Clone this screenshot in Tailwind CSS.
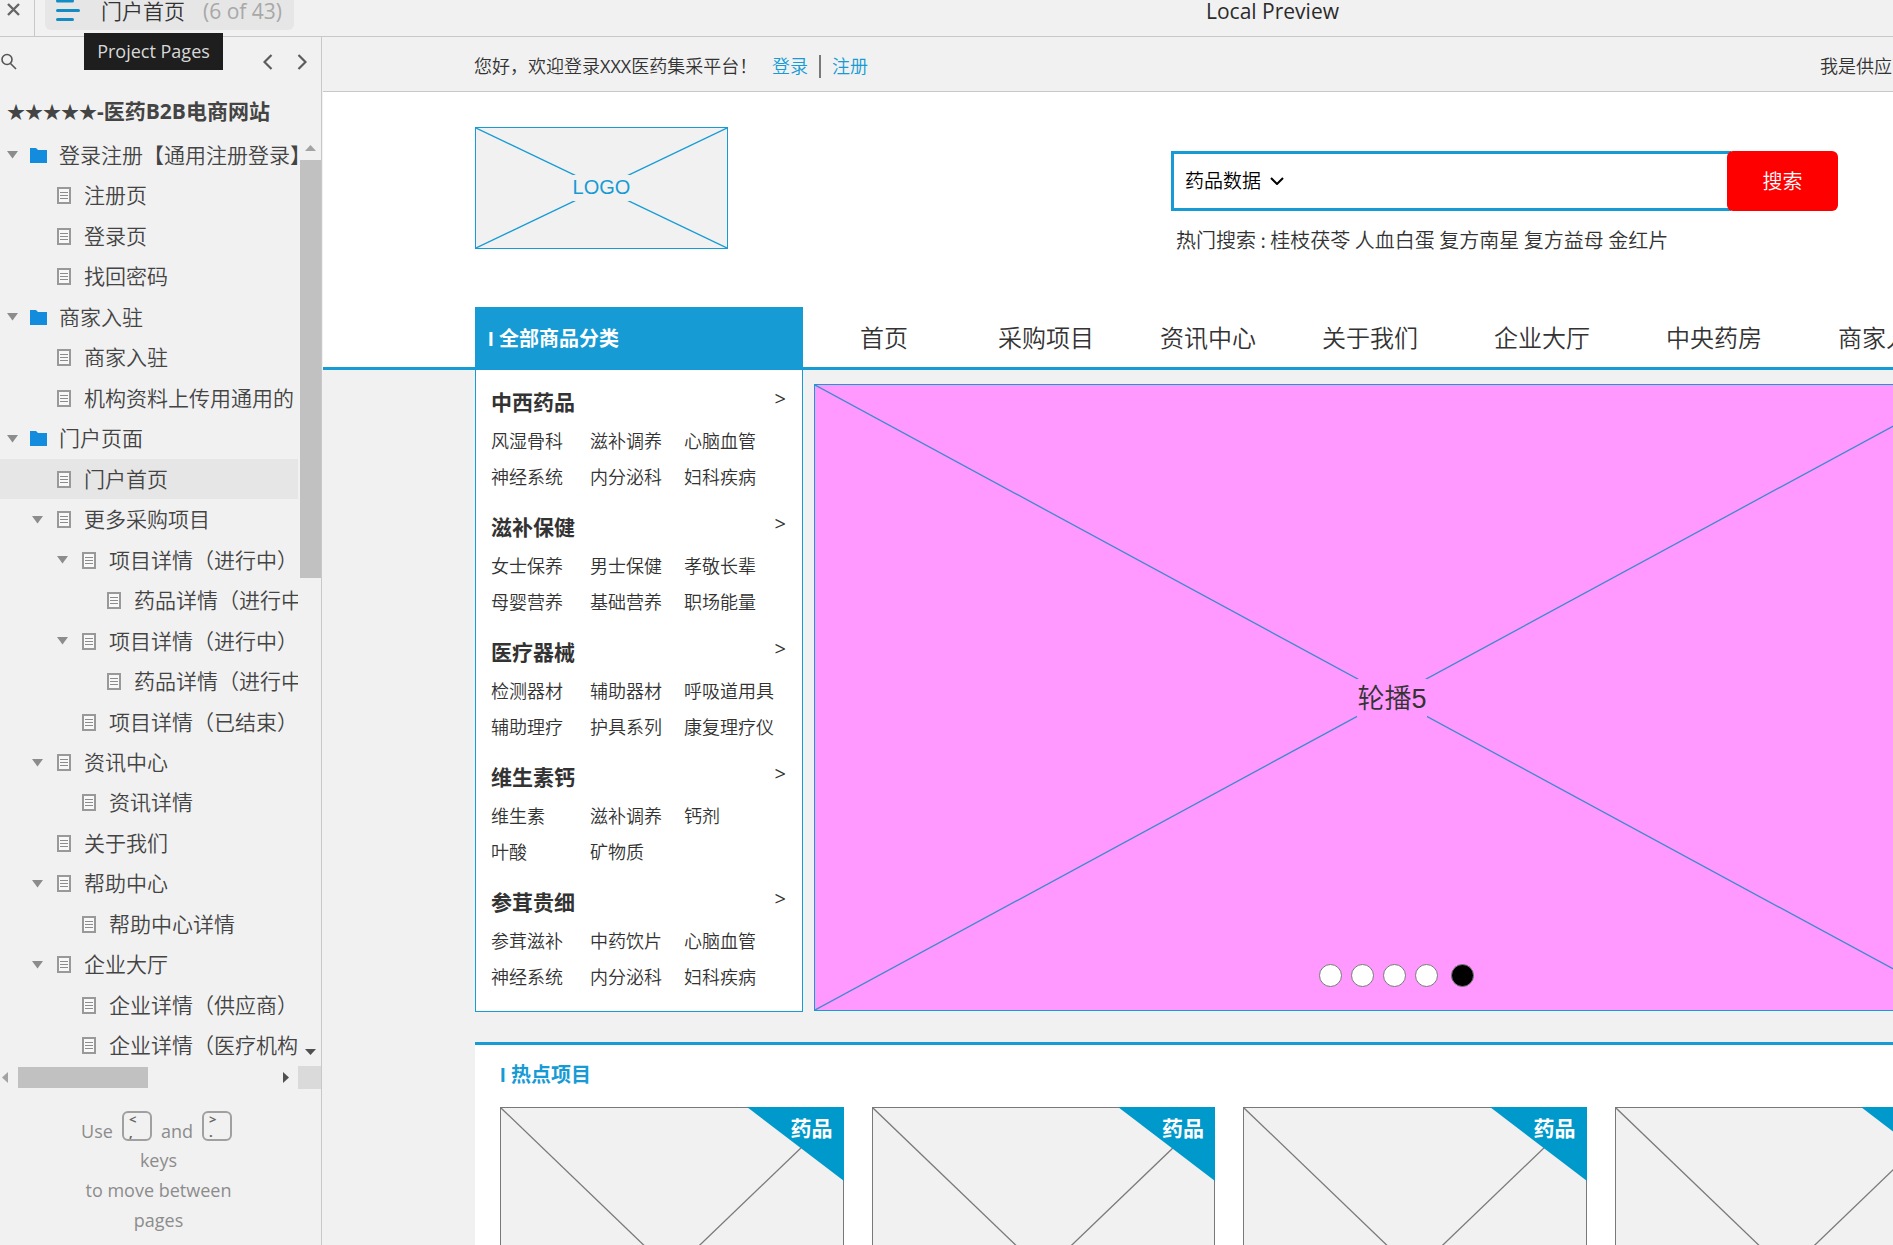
<!DOCTYPE html>
<html lang="zh-CN">
<head>
    <meta charset="UTF-8">
    <meta name="viewport" content="width=device-width, initial-scale=1.0">
    <title>门户首页 - 医药B2B电商网站</title>
    <script src="https://cdn.jsdelivr.net/npm/@tailwindcss/browser@4"></script>
</head>
<body class="flex flex-col h-screen overflow-hidden bg-[#f1f1f1] text-[#333333] font-[350] font-['Open_Sans','Noto_Sans_CJK_SC',sans-serif]">
    <!-- Shared icons -->
    <svg class="hidden" aria-hidden="true">
        <symbol id="icon-arrow" viewBox="0 0 11 8"><path d="M0 0H11L5.5 7.5Z" fill="#8c8c8c"/></symbol>
        <symbol id="icon-folder" viewBox="0 0 17 15"><path d="M0 0H6L8 2H17V15H0Z" fill="#138cdd"/></symbol>
        <symbol id="icon-page" viewBox="0 0 14 17"><path d="M1 1H13V16H1Z" fill="#f8f8f8" stroke="#999999" stroke-width="2"/><path d="M3 5.5H11M3 8.5H11M3 11.5H11" stroke="#8c8c8c" stroke-width="1.2"/></symbol>
    </svg>

    <!-- Player bar -->
    <header class="relative z-10 flex shrink-0 h-[37px] border-b border-[#c8c8c8]">
        <button class="flex w-[35px] pl-[7px] pt-[3px] border-r border-[#c8c8c8]" aria-label="Close">
            <svg class="w-[13px] h-[13px]" viewBox="0 0 13 13" stroke="#666666" stroke-width="2.4"><path d="M1 1L12 12M12 1L1 12"/></svg>
        </button>
        <button class="flex items-start w-[249px] h-[30px] ml-[10px] pl-[11px] rounded-b-md bg-[#e6e6e6] text-[21px] leading-[22px] whitespace-nowrap">
            <svg class="w-[24px] h-[21px]" viewBox="0 0 24 21" stroke="#138cc4" stroke-width="3" stroke-linecap="round"><path d="M1.5 1H16.5M1.5 10.5H22.5M1.5 19.5H16.5"/></svg>
            <span class="ml-[21px]">门户首页</span>
            <span class="ml-[18px] font-normal text-[#a8a8a8]">(6 of 43)</span>
        </button>
        <div class="absolute left-[84px] top-[33px] w-[139px] h-[37px] bg-[#1e1e1e] text-center text-[18px] leading-[36px] font-normal text-[#d8d8d8]">Project Pages</div>
        <div class="ml-[912px] text-[21px] leading-[22px] font-normal text-[#2b2b2b]">Local Preview</div>
    </header>

    <div class="flex grow min-h-0">
        <!-- Sidebar -->
        <aside class="flex flex-col shrink-0 w-[322px] border-r border-[#c8c8c8]">
            <div class="flex items-center shrink-0 h-[49px] pr-[14px]">
                <button aria-label="Search">
                    <svg class="w-[17px] h-[17px]" viewBox="0 0 17 17" fill="none" stroke="#555555" stroke-width="1.6"><circle cx="7" cy="6.5" r="5"/><path d="M10.5 10.5L16 16"/></svg>
                </button>
                <button class="ml-auto" aria-label="Previous page">
                    <svg class="w-[10px] h-[16px]" viewBox="0 0 10 16" fill="none" stroke="#5c5c5c" stroke-width="2.2"><path d="M8.5 1L1.5 8L8.5 15"/></svg>
                </button>
                <button class="ml-6" aria-label="Next page">
                    <svg class="w-[10px] h-[16px]" viewBox="0 0 10 16" fill="none" stroke="#5c5c5c" stroke-width="2.2"><path d="M1.5 1L8.5 8L1.5 15"/></svg>
                </button>
            </div>
            <h1 class="shrink-0 h-[49px] pl-[7px] text-[21px] leading-[50px] font-bold text-[#444444] whitespace-nowrap"><span class="text-[18px]">★★★★★</span>-医药B2B电商网站</h1>

            <div class="flex shrink-0 h-[931px]">
                <ul id="pageTree" class="flex flex-col w-[298px] overflow-hidden text-[21px] leading-[30px] text-[#444444] whitespace-nowrap"></ul>
                <!-- Vertical scrollbar -->
                <div class="flex flex-col w-[21px] ml-[2px] pt-[10px] pb-[11px]">
                    <svg class="w-[11px] h-[6px] mx-auto" viewBox="0 0 11 6"><path d="M0 6H11L5.5 0Z" fill="#a3a3a3"/></svg>
                    <div class="w-full h-[418px] mt-[9px] bg-[#c1c1c1]"></div>
                    <svg class="w-[11px] h-[6px] mx-auto mt-auto" viewBox="0 0 11 6"><path d="M0 0H11L5.5 6Z" fill="#505050"/></svg>
                </div>
            </div>
            <!-- Horizontal scrollbar -->
            <div class="flex items-center shrink-0 h-[23px] pl-[2px]">
                <svg class="w-[6px] h-[11px]" viewBox="0 0 6 11"><path d="M6 0V11L0 5.5Z" fill="#a3a3a3"/></svg>
                <div class="w-[130px] h-[21px] ml-[10px] bg-[#c1c1c1]"></div>
                <svg class="w-[6px] h-[11px] ml-auto" viewBox="0 0 6 11"><path d="M0 0V11L6 5.5Z" fill="#505050"/></svg>
                <div class="w-[23px] h-full ml-[9px] bg-[#dadada]"></div>
            </div>

            <div class="mt-[22px] pr-1 text-center text-[18px] leading-[30px] font-normal text-[#8c8c8c]">
                <div class="flex justify-center h-[34px] pr-1">
                    <span class="pt-[5px]">Use</span>
                    <kbd class="flex flex-col w-[30px] h-[30px] mx-[9px] pl-[5px] border-2 border-[#a0a0a0] rounded-md text-left text-[13px] leading-[13px] font-bold font-['Open_Sans',sans-serif] text-[#666666]"><span>&lt;</span><span>,</span></kbd>
                    <span class="pt-[5px]">and</span>
                    <kbd class="flex flex-col w-[30px] h-[30px] ml-[9px] pl-[5px] border-2 border-[#a0a0a0] rounded-md text-left text-[13px] leading-[13px] font-bold font-['Open_Sans',sans-serif] text-[#666666]"><span>&gt;</span><span>.</span></kbd>
                </div>
                <p>keys<br>to move between<br>pages</p>
            </div>
        </aside>

        <!-- Prototype page -->
        <main class="grow min-w-0 ml-px overflow-hidden">
            <div class="flex items-center h-[55px] pl-[151px] border-b border-[#c8c8c8] text-[18px] whitespace-nowrap">
                <div class="flex items-center w-[1346px] shrink-0 pt-[4px]">
                    <span class="w-[298px]">您好，欢迎登录<span class="font-normal">XXX</span>医药集采平台！</span>
                    <a href="#" class="text-[#169bd5]">登录</a>
                    <span class="w-[2px] h-[23px] mx-[11px] bg-[#797979]"></span>
                    <a href="#" class="text-[#169bd5]">注册</a>
                </div>
                <a href="#" class="pt-[4px]">我是供应商</a>
            </div>

            <div class="pt-[35px] bg-white">
                <div class="flex w-[1495px] h-[180px] ml-[152px]">
                    <div class="relative flex items-center justify-center w-[253px] h-[122px] border border-[#169bd5] bg-[#f1f1f1] text-[20px] font-normal font-['Liberation_Sans',sans-serif] text-[#169bd5]">
                        <svg class="absolute inset-0 w-full h-full" stroke="#169bd5" stroke-width="1.3"><line x1="0" y1="0" x2="100%" y2="100%"/><line x1="0" y1="100%" x2="100%" y2="0"/></svg>
                        <span class="relative pb-[2px] bg-[#f1f1f1] leading-[24px]">LOGO</span>
                    </div>
                    <div class="ml-[443px] pt-6 w-[667px]">
                        <form class="flex h-[60px]">
                            <div class="flex items-center grow -mr-1 pl-[11px] border-3 border-[#169bd5] bg-white">
                                <select class="appearance-none w-[85px] text-[19px] text-black" aria-label="搜索范围">
                                    <option>药品数据</option>
                                </select>
                                <svg class="w-[14px] h-[8px]" viewBox="0 0 14 8" fill="none" stroke="#000000" stroke-width="2"><path d="M1 1L7 7L13 1"/></svg>
                                <input type="text" class="grow h-full ml-3 outline-none" aria-label="搜索">
                            </div>
                            <button type="button" class="relative w-[111px] pt-[2px] rounded-md bg-[#ff0000] text-[20px] text-white">搜索</button>
                        </form>
                        <p class="mt-[14px] pl-[5px] text-[20px] leading-[30px] font-['Noto_Sans_CJK_SC',sans-serif] whitespace-nowrap">热门搜索 : 桂枝茯苓 人血白蛋 复方南星 复方益母 金红片</p>
                    </div>
                </div>
                <!-- Main navigation -->
                <div class="h-[63px] pl-[152px] border-b-3 border-[#169bd5]">
                    <nav class="flex items-center w-[1495px] text-[24px] leading-[36px] text-center whitespace-nowrap">
                        <div class="w-[328px] h-[60px] pl-[13px] bg-[#169bd5] text-left text-[20px] leading-[64px] font-bold font-['Liberation_Sans','Noto_Sans_CJK_SC',sans-serif] text-white">I 全部商品分类</div>
                        <div class="flex gap-[66px] ml-[33px] pt-[2px]">
                            <a href="#" class="w-24">首页</a>
                            <a href="#" class="w-24">采购项目</a>
                            <a href="#" class="w-24">资讯中心</a>
                            <a href="#" class="w-24">关于我们</a>
                        </div>
                        <div class="flex gap-[76px] ml-[76px] pt-[2px]">
                            <a href="#" class="w-24">企业大厅</a>
                            <a href="#" class="w-24">中央药房</a>
                            <a href="#" class="w-24">商家入驻</a>
                        </div>
                    </nav>
                </div>
            </div>

            <div class="w-[1495px] ml-[152px]">
                <div class="flex gap-[11px]">
                    <div id="categories" class="w-[328px] h-[642px] pt-[11px] pl-[15px] border border-t-0 border-[#169bd5] bg-white"></div>
                    <!-- Carousel -->
                    <section class="relative flex items-center justify-center grow h-[627px] mt-[14px] border border-[#169bd5] bg-[#ff99ff] text-[27px] font-['Liberation_Sans','Noto_Sans_CJK_SC',sans-serif]">
                        <svg class="absolute inset-0 w-full h-full" stroke="#3d8ad0" stroke-width="1.3"><line x1="0" y1="0" x2="100%" y2="100%"/><line x1="0" y1="100%" x2="100%" y2="0"/></svg>
                        <span class="relative pt-[2px] bg-[#ff99ff] leading-[36px]">轮播5</span>
                        <div class="absolute left-[504px] bottom-[23px] flex gap-[9px]">
                            <button class="size-[23px] rounded-full border border-[#797979] bg-white" aria-label="轮播1"></button>
                            <button class="size-[23px] rounded-full border border-[#797979] bg-white" aria-label="轮播2"></button>
                            <button class="size-[23px] rounded-full border border-[#797979] bg-white" aria-label="轮播3"></button>
                            <button class="size-[23px] rounded-full border border-[#797979] bg-white" aria-label="轮播4"></button>
                            <button class="size-[23px] ml-[4px] rounded-full border border-[#797979] bg-black" aria-label="轮播5"></button>
                        </div>
                    </section>
                </div>

                <!-- Hot projects -->
                <section class="mt-[30px] pl-[25px] pr-[12px] border-t-3 border-[#169bd5] bg-white">
                    <h2 class="h-[62px] text-[20px] leading-[60px] font-bold font-['Liberation_Sans','Noto_Sans_CJK_SC',sans-serif] text-[#169bd5]">I 热点项目</h2>
                    <div id="hotProjects" class="grid grid-cols-4 gap-[28px]"></div>
                </section>
            </div>
        </main>
    </div>

    <script>
        // [depth, icon, name, has children]
        const pages = [
            [0, 'folder', '登录注册【通用注册登录】', true],
            [1, 'page', '注册页', false],
            [1, 'page', '登录页', false],
            [1, 'page', '找回密码', false],
            [0, 'folder', '商家入驻', true],
            [1, 'page', '商家入驻', false],
            [1, 'page', '机构资料上传用通用的', false],
            [0, 'folder', '门户页面', true],
            [1, 'page', '门户首页', false],
            [1, 'page', '更多采购项目', true],
            [2, 'page', '项目详情（进行中）', true],
            [3, 'page', '药品详情（进行中）', false],
            [2, 'page', '项目详情（进行中）', true],
            [3, 'page', '药品详情（进行中）', false],
            [2, 'page', '项目详情（已结束）', false],
            [1, 'page', '资讯中心', true],
            [2, 'page', '资讯详情', false],
            [1, 'page', '关于我们', false],
            [1, 'page', '帮助中心', true],
            [2, 'page', '帮助中心详情', false],
            [1, 'page', '企业大厅', true],
            [2, 'page', '企业详情（供应商）', false],
            [2, 'page', '企业详情（医疗机构）', false]
        ];
        const current = 8;

        document.getElementById('pageTree').innerHTML = pages.map(([depth, icon, name, open], i) => `
            <li class="flex items-center flex-1 ${i === current ? 'bg-[#e6e6e6]' : ''}" style="padding-left: ${7 + depth * 25}px">
                <svg class="shrink-0 w-[11px] h-[8px] ${open ? '' : 'invisible'}"><use href="#icon-arrow"/></svg>
                ${icon === 'folder'
                    ? '<svg class="shrink-0 w-[17px] h-[15px] mx-[12px]"><use href="#icon-folder"/></svg>'
                    : '<svg class="shrink-0 w-[14px] h-[17px] ml-[14px] mr-[13px]"><use href="#icon-page"/></svg>'}
                <a href="#" class="pb-px">${name}</a>
            </li>`).join('');

        const categories = [
            ['中西药品', ['风湿骨科', '滋补调养', '心脑血管', '神经系统', '内分泌科', '妇科疾病']],
            ['滋补保健', ['女士保养', '男士保健', '孝敬长辈', '母婴营养', '基础营养', '职场能量']],
            ['医疗器械', ['检测器材', '辅助器材', '呼吸道用具', '辅助理疗', '护具系列', '康复理疗仪']],
            ['维生素钙', ['维生素', '滋补调养', '钙剂', '叶酸', '矿物质']],
            ['参茸贵细', ['参茸滋补', '中药饮片', '心脑血管', '神经系统', '内分泌科', '妇科疾病']]
        ];

        document.getElementById('categories').innerHTML = categories.map(([title, items]) => `
            <section class="h-[125px]">
                <div class="flex justify-between pr-4 font-bold text-[21px] leading-[42px]">
                    <h3>${title}</h3>
                    <a href="#" class="text-[20px] leading-[36px] font-normal">&gt;</a>
                </div>
                <div class="grid grid-cols-[99px_94px_1fr] text-[18px] leading-[36px] whitespace-nowrap">
                    ${items.map(item => `<a href="#">${item}</a>`).join('')}
                </div>
            </section>`).join('');

        document.getElementById('hotProjects').innerHTML = ['药品', '药品', '药品', '药品'].map(tag => `
            <article class="relative h-[330px] border border-[#797979] bg-[#f1f1f1]">
                <svg class="absolute inset-0 w-full h-full" stroke="#797979" stroke-width="1.3"><line x1="0" y1="0" x2="100%" y2="100%"/><line x1="0" y1="100%" x2="100%" y2="0"/></svg>
                <svg class="absolute -right-px -top-px w-[97px] h-[74px]" viewBox="0 0 97 74"><path d="M0 0H97V74Z" fill="#0099cc"/></svg>
                <span class="absolute right-[10px] top-[5px] text-[21px] leading-[30px] font-bold text-white">${tag}</span>
            </article>`).join('');
    </script>
</body>
</html>
